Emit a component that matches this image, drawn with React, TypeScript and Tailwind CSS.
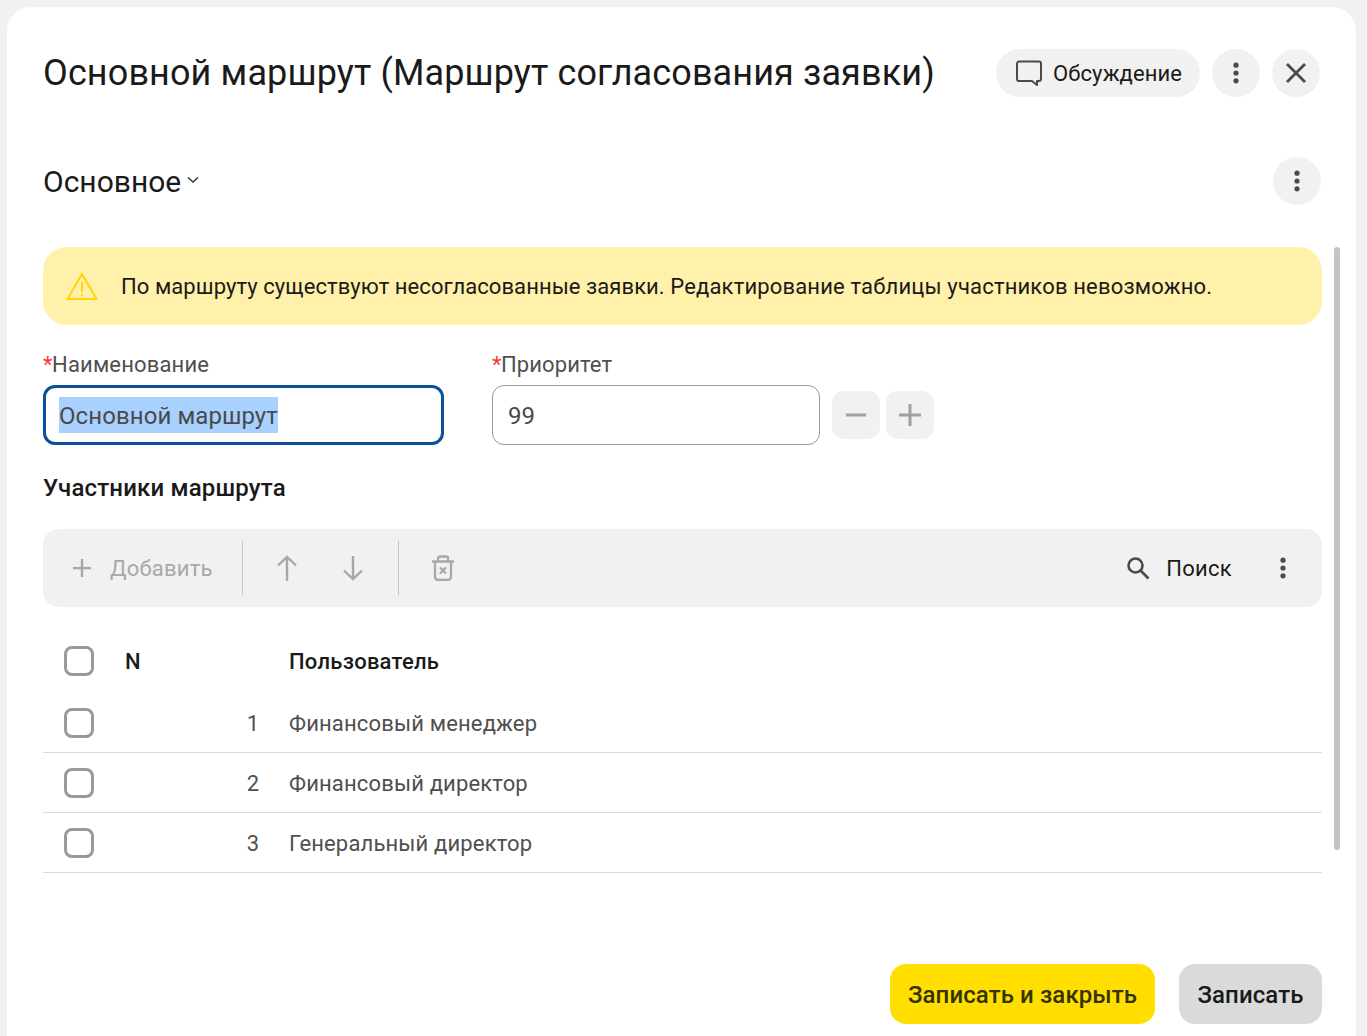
import React from "react";

const Dots = ({ className = "" }: { className?: string }) => (
  <svg width="6" height="22" viewBox="0 0 6 22" className={className} fill="#4a4a4a">
    <circle cx="3" cy="3.2" r="2.6" />
    <circle cx="3" cy="11" r="2.6" />
    <circle cx="3" cy="18.8" r="2.6" />
  </svg>
);

const RoundBtn = ({ children }: { children: React.ReactNode }) => (
  <div className="w-12 h-12 rounded-full bg-[#f1f1f1] flex items-center justify-center shrink-0">{children}</div>
);

const Check = () => <div className="w-[30px] h-[30px] rounded-[8px] border-[3px] border-[#999999] bg-white shrink-0" />;

const rows = [
  ["1", "Финансовый менеджер"],
  ["2", "Финансовый директор"],
  ["3", "Генеральный директор"],
];

export default function App() {
  return (
    <div className="relative h-[1036px] overflow-hidden bg-[#f1f1f1] pt-[7px] pl-[7px] pr-[11px] font-['Roboto',sans-serif]">
      <div className="relative h-[1100px] rounded-t-[24px] bg-white pl-[36px] pr-[34px] pt-[42px]">
        {/* header */}
        <div className="flex items-center h-12">
          <div className="text-[36px] leading-[48px] tracking-[0.12px] text-[#1a1a1a] whitespace-nowrap">
            Основной маршрут (Маршрут согласования заявки)
          </div>
          <div className="ml-auto flex items-center gap-3 mr-[2px]">
            <div className="h-12 w-[204px] rounded-full bg-[#f1f1f1] flex items-center pl-5 gap-[10px]">
              <svg width="27" height="27" viewBox="0 0 27 27" fill="none" stroke="#4a4a4a" strokeWidth="2" strokeLinejoin="round">
                <path d="M3 1.5H23A2 2 0 0 1 25 3.5V19A2 2 0 0 1 23 21H21V25L16 21H3A2 2 0 0 1 1 19V3.5A2 2 0 0 1 3 1.5Z" />
              </svg>
              <span className="pt-[2px] text-[22px] leading-none tracking-[0.1px] text-[#1a1a1a] whitespace-nowrap">Обсуждение</span>
            </div>
            <RoundBtn><Dots /></RoundBtn>
            <RoundBtn>
              <svg width="24" height="24" viewBox="0 0 24 24" fill="none" stroke="#4a4a4a" strokeWidth="2.8">
                <path d="M3 3L21 21M21 3L3 21" />
              </svg>
            </RoundBtn>
          </div>
        </div>

        {/* section */}
        <div className="flex items-center h-12 mt-[60px]">
          <span className="pt-[2px] text-[30px] leading-[48px] text-[#1a1a1a]">Основное</span>
          <svg width="14" height="10" viewBox="0 0 14 10" fill="none" stroke="#333333" strokeWidth="1.5" className="ml-[5px] mb-[2px]">
            <path d="M2 2.5L7 7L12 2.5" />
          </svg>
          <div className="ml-auto mr-[1px]"><RoundBtn><Dots /></RoundBtn></div>
        </div>

        {/* alert */}
        <div className="mt-[42px] h-[78px] rounded-[24px] bg-[#fff0aa] flex items-center pl-[23px]">
          <svg width="32" height="28" viewBox="0 0 32 28" fill="none" stroke="#ffd600" strokeWidth="2" strokeLinejoin="round" strokeLinecap="round">
            <path d="M16 2L30.5 27H1.5L16 2Z" />
            <path d="M16 10.5V19" />
            <path d="M16 22.5V23" />
          </svg>
          <span className="ml-[23px] pt-[2px] text-[22px] leading-none text-[#1a1a1a] whitespace-nowrap">
            <span className="tracking-[0.07px]">По маршруту существуют несогласованные заявки. </span>
            <span className="tracking-[0.165px]">Редактирование таблицы участников невозможно.</span>
          </span>
        </div>

        {/* fields */}
        <div className="flex mt-[25px] gap-12">
          <div className="w-[401px]">
            <div className="h-[30px] text-[22px] leading-[30px] tracking-[0.15px] text-[#4f4f4f] whitespace-nowrap">
              <span className="text-[#f53838] tracking-[-0.4px]">*</span>Наименование
            </div>
            <div className="mt-[5px] h-[60px] rounded-[12px] border-[3px] border-[#0b5099] flex items-center pl-[13px]">
              <span className="inline-block h-[36px] bg-[#a9d1ff] text-[24px] leading-[38px] tracking-[0.08px] text-[#4a4a4a] whitespace-nowrap">Основной маршрут</span>
            </div>
          </div>
          <div>
            <div className="h-[30px] text-[22px] leading-[30px] tracking-[0.1px] text-[#4f4f4f] whitespace-nowrap">
              <span className="text-[#f53838] tracking-[-0.4px]">*</span>Приоритет
            </div>
            <div className="mt-[5px] flex items-center">
              <div className="w-[328px] h-[60px] rounded-[12px] border border-[#999999] flex items-center pl-[15px] pt-[2px] text-[24px] text-[#4a4a4a]">99</div>
              <div className="ml-3 w-12 h-12 rounded-[12px] bg-[#f1f1f1] flex items-center justify-center">
                <svg width="20" height="4" viewBox="0 0 20 4"><rect y="0.5" width="20" height="3" fill="#a0a0a0" /></svg>
              </div>
              <div className="ml-[6px] w-12 h-12 rounded-[12px] bg-[#f1f1f1] flex items-center justify-center">
                <svg width="22" height="22" viewBox="0 0 22 22" fill="#a0a0a0"><rect y="9.5" width="22" height="3" /><rect x="9.5" width="3" height="22" /></svg>
              </div>
            </div>
          </div>
        </div>

        <div className="mt-[27px] h-[32px] text-[24px] leading-[32px] tracking-[0.17px] font-medium text-[#1a1a1a] whitespace-nowrap">Участники маршрута</div>

        {/* toolbar */}
        <div className="mt-[25px] h-[78px] rounded-[16px] bg-[#f1f1f1] flex items-center">
          <svg width="18" height="18" viewBox="0 0 18 18" fill="#a8a8a8" className="ml-[30px]"><rect y="7.9" width="18" height="2.4" /><rect x="7.8" width="2.4" height="18" /></svg>
          <span className="ml-[19px] w-[102px] text-[22px] tracking-[0.2px] text-[#a8a8a8] whitespace-nowrap">Добавить</span>
          <div className="ml-[30px] w-px h-[54px] bg-[#c4c4c4]" />
          <svg width="24" height="28" viewBox="0 0 24 28" fill="none" stroke="#a8a8a8" strokeWidth="2.4" className="ml-[32px]"><path d="M12 27V3M3 11.5L12 3L21 11.5" /></svg>
          <svg width="24" height="28" viewBox="0 0 24 28" fill="none" stroke="#a8a8a8" strokeWidth="2.4" className="ml-[42px]"><path d="M12 2V25M3 16.5L12 25L21 16.5" /></svg>
          <div className="ml-[33px] w-px h-[54px] bg-[#c4c4c4]" />
          <svg width="24" height="26" viewBox="0 0 24 26" fill="none" stroke="#a8a8a8" strokeWidth="2.3" className="ml-[32px]">
            <path d="M1 6.5H23M7 6V3C7 2 8 1.5 9 1.5H15C16 1.5 17 2 17 3V6M4 6.5V21.5C4 23.5 5 24.8 7 24.8H17C19 24.8 20 23.5 20 21.5V6.5" />
            <path d="M9 12.5L15 18.5M15 12.5L9 18.5" />
          </svg>
          <svg width="24" height="24" viewBox="0 0 24 24" fill="none" stroke="#4a4a4a" strokeWidth="2.6" className="ml-auto">
            <circle cx="9.5" cy="9.5" r="7" />
            <path d="M14.5 14.5L22.5 22.5" />
          </svg>
          <span className="ml-[16px] text-[22px] tracking-[0.3px] text-[#1a1a1a] whitespace-nowrap">Поиск</span>
          <Dots className="ml-[48px] mr-[36px]" />
        </div>

        {/* table */}
        <div className="mt-[24px] h-[62px] pb-[2px] flex items-center pl-[21px]">
          <Check />
          <span className="ml-[31px] w-[164px] text-[22px] font-medium text-[#1a1a1a]">N</span>
          <span className="text-[22px] font-medium tracking-[0.25px] text-[#1a1a1a] whitespace-nowrap">Пользователь</span>
        </div>
        {rows.map(([n, name]) => (
          <div key={n} className="h-[60px] flex items-center pl-[21px] border-b border-[#dcdcdc] box-border">
            <Check />
            <span className="ml-[30px] pt-[2px] w-[135px] text-right text-[22px] text-[#4f4f4f]">{n}</span>
            <span className="ml-[30px] pt-[2px] text-[22px] tracking-[0.16px] text-[#4f4f4f] whitespace-nowrap">{name}</span>
          </div>
        ))}

        {/* footer */}
        <div className="mt-[91px] flex justify-end gap-6">
          <div className="h-[60px] w-[265px] pt-[2px] rounded-[16px] bg-[#ffde00] flex items-center justify-center text-[24px] tracking-[0.1px] font-medium text-[#333300] whitespace-nowrap">Записать и закрыть</div>
          <div className="h-[60px] w-[143px] pt-[2px] rounded-[16px] bg-[#dadada] flex items-center justify-center text-[24px] tracking-[0.1px] font-medium text-[#1a1a1a] whitespace-nowrap">Записать</div>
        </div>

        {/* overlay scrollbar */}
        <div className="absolute left-[1327px] top-[240px] w-[6px] h-[603px] rounded-full bg-[#c4c4c4]" />
      </div>
    </div>
  );
}
